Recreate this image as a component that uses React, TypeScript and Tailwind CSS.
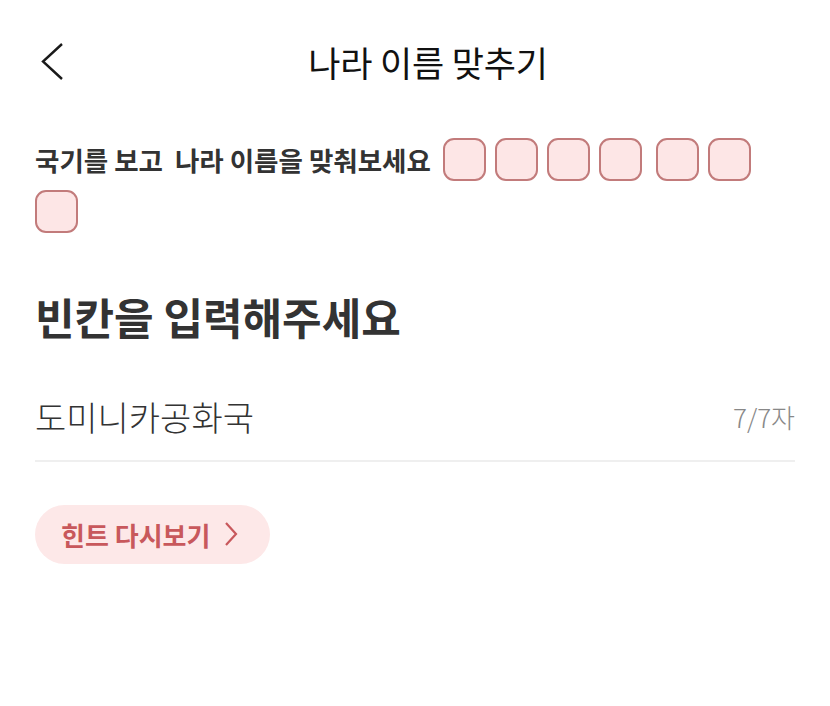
import React from 'react';

const letters = ['도', '미', '니', '카', ' ', '공', '화', '국'];

function Box({ wide }: { wide?: boolean }) {
  return (
    <span
      className={
        'block h-[43px] w-[43px] rounded-[11px] border-2 border-[#c27b7b] bg-[#fde6e6] ' +
        (wide ? 'ml-[5px]' : '')
      }
    />
  );
}

export default function App() {
  let afterSpace = false;
  return (
    <div className="min-h-screen bg-white font-['Noto_Sans_CJK_KR','Noto_Sans',sans-serif] text-[#333]">
      <header className="grid h-[124px] grid-cols-[1fr_auto_1fr] items-center px-[35px]">
        <button className="flex h-10 w-10 items-center justify-start">
          <svg width="30" height="40" viewBox="0 0 30 40" fill="none">
            <path d="M27 2 L8 19.5 L27 37" stroke="#1a1a1a" strokeWidth="2.4" strokeLinejoin="miter" />
          </svg>
        </button>
        <h1 className="pl-[26px] text-[35px] font-normal tracking-[-0.2px] text-[#111]">나라 이름 맞추기</h1>
        <div />
      </header>

      <main className="px-[35px]">
        <div className="mt-[14px] flex flex-wrap items-center gap-x-[9px] gap-y-[9px]">
          <p className="mr-[3px] text-[26.5px] font-bold tracking-[0px] text-[#333]">
            국기를 보고&nbsp; 나라 이름을 맞춰보세요
          </p>
          {letters.map((l, i) => {
            if (l === ' ') {
              afterSpace = true;
              return null;
            }
            const wide = afterSpace;
            afterSpace = false;
            return <Box key={i} wide={wide} />;
          })}
        </div>

        <h2 className="mt-[51px] text-[43px] font-bold text-[#333]">빈칸을 입력해주세요</h2>

        <div className="mt-[42px] flex items-center justify-between border-b-2 border-[#efefef] pb-[18px]">
          <span className="text-[34px] font-light text-[#333]">도미니카공화국</span>
          <span className="text-[26px] font-light text-[#888]">7/7자</span>
        </div>

        <button className="mt-[43px] flex h-[59px] items-center gap-[14px] rounded-full bg-[#fde8e8] pl-[26px] pr-[32px]">
          <span className="text-[26px] font-bold text-[#c8585c]">힌트 다시보기</span>
          <svg width="14" height="26" viewBox="0 0 14 26" fill="none">
            <path d="M2 2 L12 13 L2 24" stroke="#c8585c" strokeWidth="2.2" />
          </svg>
        </button>
      </main>
    </div>
  );
}
